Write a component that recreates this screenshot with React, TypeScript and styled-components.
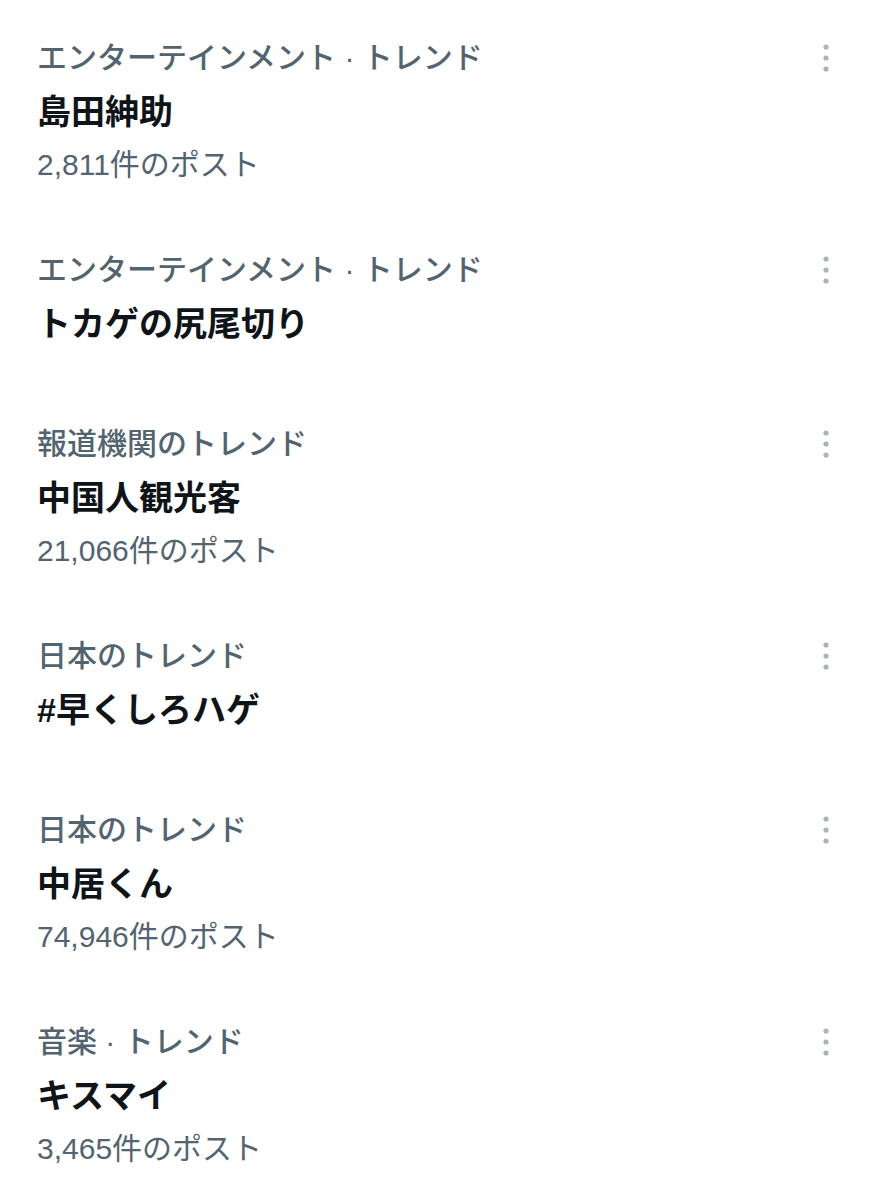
import React from "react";
import styled, { createGlobalStyle } from "styled-components";

const GlobalStyle = createGlobalStyle`
  html, body {
    margin: 0;
    background: #ffffff;
  }
  body {
    font-family: "Liberation Sans", "Noto Sans CJK JP", sans-serif;
    -webkit-font-smoothing: antialiased;
  }
`;

const List = styled.main`
  width: 871px;
  display: flex;
  flex-direction: column;
`;

const Item = styled.section<{ $hasCount: boolean }>`
  display: flex;
  flex-direction: column;
  padding: 38px 25px ${(p) => (p.$hasCount ? "27px" : "42px")} 37px;
`;

const Header = styled.div`
  display: flex;
  align-items: center;
  height: 40px;
`;

const Category = styled.span`
  flex: 1;
  font-size: 30px;
  line-height: 40px;
  font-weight: 500;
  color: #536471;
  white-space: nowrap;
`;

const MoreButton = styled.button`
  width: 40px;
  height: 40px;
  border: 0;
  padding: 0;
  background: transparent;
  display: flex;
  align-items: center;
  justify-content: center;
  color: #a9b3bc;
`;

const Title = styled.div`
  margin-top: 14px;
  font-size: 34px;
  line-height: 40px;
  font-weight: 600;
  color: #0f1419;
  white-space: nowrap;
`;

const Count = styled.div`
  margin-top: 13px;
  font-size: 30px;
  line-height: 40px;
  color: #536471;
  white-space: nowrap;
`;

function MoreIcon() {
  return (
    <svg width="8" height="30" viewBox="0 0 8 30" fill="currentColor">
      <circle cx="4" cy="4" r="2.6" />
      <circle cx="4" cy="15" r="2.6" />
      <circle cx="4" cy="26" r="2.6" />
    </svg>
  );
}

const trends = [
  { category: "エンターテインメント · トレンド", title: "島田紳助", count: "2,811件のポスト" },
  { category: "エンターテインメント · トレンド", title: "トカゲの尻尾切り" },
  { category: "報道機関のトレンド", title: "中国人観光客", count: "21,066件のポスト" },
  { category: "日本のトレンド", title: "#早くしろハゲ" },
  { category: "日本のトレンド", title: "中居くん", count: "74,946件のポスト" },
  { category: "音楽 · トレンド", title: "キスマイ", count: "3,465件のポスト" },
];

export default function App() {
  return (
    <>
      <GlobalStyle />
      <List>
        {trends.map((t, i) => (
          <Item key={i} $hasCount={!!t.count}>
            <Header>
              <Category>{t.category}</Category>
              <MoreButton type="button" aria-label="その他">
                <MoreIcon />
              </MoreButton>
            </Header>
            <Title>{t.title}</Title>
            {t.count && <Count>{t.count}</Count>}
          </Item>
        ))}
      </List>
    </>
  );
}
